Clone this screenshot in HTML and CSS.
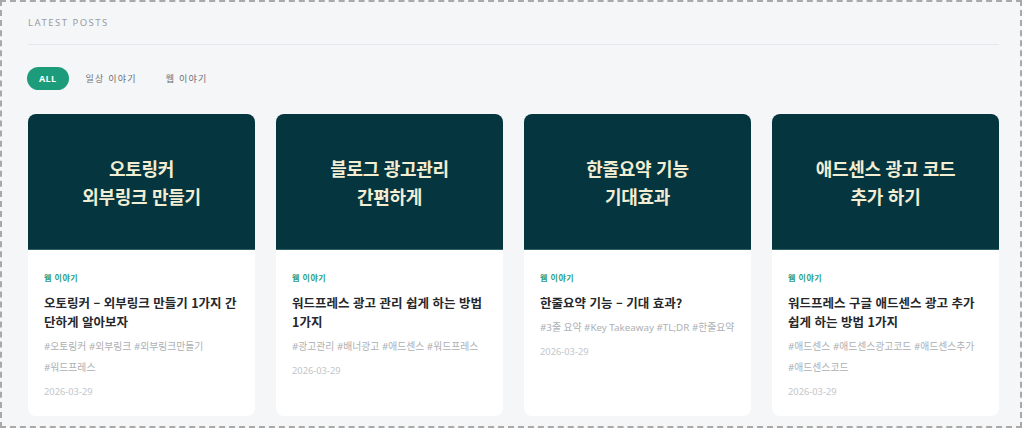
FILE: index.html
```html
<!DOCTYPE html>
<html lang="ko">
<head>
<meta charset="utf-8">
<title>Latest Posts</title>
<link rel="stylesheet" href="styles.css">
</head>
<body>
<div class="frame">
  <div class="section-head">LATEST POSTS</div>
  <div class="tabs">
    <span class="tab tab-active">ALL</span>
    <span class="tab">일상 이야기</span>
    <span class="tab">웹 이야기</span>
  </div>
  <div class="cards">
    <article class="card">
      <div class="thumb"><span>오토링커<br>외부링크 만들기</span></div>
      <div class="body">
        <div class="cat">웹 이야기</div>
        <h3 class="title">오토링커 – 외부링크 만들기 1가지 간단하게 알아보자</h3>
        <div class="tags"><span class="tag">#오토링커</span> <span class="tag">#외부링크</span> <span class="tag">#외부링크만들기</span> <span class="tag">#워드프레스</span></div>
        <div class="date">2026-03-29</div>
      </div>
    </article>
    <article class="card">
      <div class="thumb"><span>블로그 광고관리<br>간편하게</span></div>
      <div class="body">
        <div class="cat">웹 이야기</div>
        <h3 class="title">워드프레스 광고 관리 쉽게 하는 방법 1가지</h3>
        <div class="tags"><span class="tag">#광고관리</span> <span class="tag">#배너광고</span> <span class="tag">#애드센스</span> <span class="tag">#워드프레스</span></div>
        <div class="date">2026-03-29</div>
      </div>
    </article>
    <article class="card">
      <div class="thumb"><span>한줄요약 기능<br>기대효과</span></div>
      <div class="body">
        <div class="cat">웹 이야기</div>
        <h3 class="title">한줄요약 기능 – 기대 효과?</h3>
        <div class="tags"><span class="tag">#3줄 요약</span> <span class="tag">#Key Takeaway</span> <span class="tag">#TL;DR</span> <span class="tag">#한줄요약</span></div>
        <div class="date">2026-03-29</div>
      </div>
    </article>
    <article class="card">
      <div class="thumb"><span>애드센스 광고 코드<br>추가 하기</span></div>
      <div class="body">
        <div class="cat">웹 이야기</div>
        <h3 class="title">워드프레스 구글 애드센스 광고 추가 쉽게 하는 방법 1가지</h3>
        <div class="tags"><span class="tag">#애드센스</span> <span class="tag">#애드센스광고코드</span> <span class="tag">#애드센스추가</span> <span class="tag">#애드센스코드</span></div>
        <div class="date">2026-03-29</div>
      </div>
    </article>
  </div>
</div>
</body>
</html>
```

FILE: styles.css
```css
html, body {
  margin: 0;
  padding: 0;
  background: #ffffff;
}
body {
  font-family: "Noto Sans", "Noto Sans CJK KR", sans-serif;
}
.frame {
  box-sizing: border-box;
  width: 1022px;
  height: 428px;
  border: 2px dashed #a9a9a9;
  background: #f4f6f8;
  padding: 14px 21px 0 25px;
  overflow: hidden;
}
.section-head {
  font-size: 9.5px;
  line-height: 14px;
  letter-spacing: 1.5px;
  color: #9a9da1;
  padding: 0 0 14px 0;
  border-bottom: 1px solid #e6e8eb;
  margin-left: 1px;
}
.tabs {
  display: flex;
  align-items: center;
  margin-top: 22px;
  height: 23px;
}
.tab {
  font-family: "Noto Sans CJK KR", sans-serif;
  font-size: 9px;
  letter-spacing: 1.2px;
  color: #6d7075;
  padding: 0 14px 0 15px;
  line-height: 23px;
}
.tab-active {
  font-family: "Open Sans", "Noto Sans", sans-serif;
  font-weight: 700;
  color: #ffffff;
  background: #1d9c7c;
  border-radius: 12px;
  padding: 0 12px;
  margin-right: 2px;
  letter-spacing: 0.4px;
}
.cards {
  display: grid;
  grid-template-columns: repeat(4, 227px);
  column-gap: 21px;
  margin-top: 24px;
  margin-left: 1px;
}
.card {
  background: #ffffff;
  border-radius: 8px;
  overflow: hidden;
  display: flex;
  flex-direction: column;
}
.thumb {
  height: 135px;
  background: #05353f;
  border-bottom: 1px solid #2f6167;
  display: flex;
  align-items: center;
  justify-content: center;
  text-align: center;
}
.thumb span {
  font-family: "Noto Sans CJK KR", sans-serif;
  font-weight: 700;
  font-size: 18px;
  line-height: 28px;
  letter-spacing: -0.3px;
  color: #f1eed3;
}
.body {
  padding: 21px 16px 14px 16px;
  font-family: "Noto Sans", "Noto Sans CJK KR", sans-serif;
}
.cat {
  font-family: "Noto Sans CJK KR", sans-serif;
  font-size: 8px;
  line-height: 14px;
  font-weight: 700;
  letter-spacing: 0.5px;
  color: #2b9d7e;
}
.title {
  margin: 8px 0 0 0;
  font-family: "Noto Sans CJK KR", sans-serif;
  font-size: 12.5px;
  line-height: 19px;
  font-weight: 700;
  color: #26282b;
}
.tags {
  margin-top: 5px;
  font-size: 9.8px;
  line-height: 21px;
  color: #adb0b4;
}
.tag {
  white-space: nowrap;
}
.date {
  margin-top: 4px;
  font-size: 9.3px;
  line-height: 20px;
  color: #c3c5c8;
}
```
